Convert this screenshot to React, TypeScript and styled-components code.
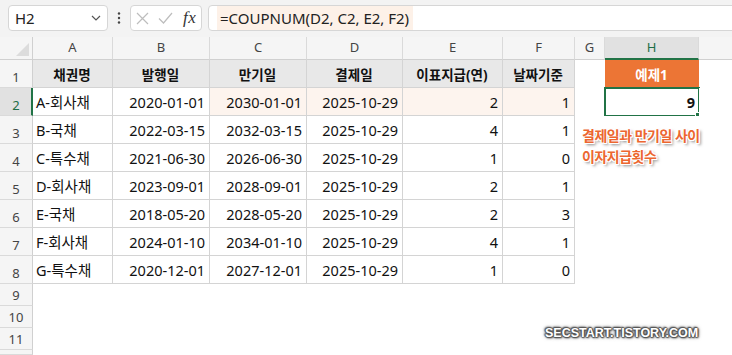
import React from 'react';
import styled, { createGlobalStyle, css } from 'styled-components';

const GlobalStyle = createGlobalStyle`
  html, body { margin: 0; padding: 0; background: #fff; }
  body { font-family: "Noto Sans", "Noto Sans CJK KR", sans-serif; overflow: hidden; }
`;

const Page = styled.div`
  width: 732px;
  height: 355px;
  overflow: hidden;
  background: #fff;
  display: flex;
  flex-direction: column;
`;

const Toolbar = styled.div`
  height: 37px;
  flex: none;
  box-sizing: border-box;
  background: #f3f3f3;
  display: flex;
  align-items: flex-start;
  padding: 5px 0 0 8px;
`;

const NameBox = styled.div`
  width: 100px;
  height: 26px;
  flex: none;
  box-sizing: border-box;
  background: #fff;
  border: 1px solid #d6d6d6;
  border-radius: 4px;
  display: flex;
  align-items: center;
  justify-content: space-between;
  padding: 0 6px 0 6px;
  font-size: 15px;
  color: #222;
`;

const Separator = styled.div`
  width: 22px;
  height: 26px;
  flex: none;
  display: flex;
  align-items: center;
  justify-content: center;
`;

const FxBox = styled.div`
  width: 72px;
  height: 26px;
  flex: none;
  box-sizing: border-box;
  background: #fff;
  border: 1px solid #d6d6d6;
  border-radius: 4px;
  display: flex;
  align-items: center;
  padding: 0 4px 0 5px;
  gap: 9px;
`;

const FxLabel = styled.span`
  font-family: "Liberation Serif", "DejaVu Serif", serif;
  font-style: italic;
  font-size: 17px;
  color: #333;
  margin-left: 1px;
  letter-spacing: 0.5px;
`;

const FormulaBar = styled.div`
  flex: 1;
  margin-left: 6px;
  margin-right: -20px;
  height: 26px;
  box-sizing: border-box;
  background: #fff;
  border: 1px solid #d6d6d6;
  border-radius: 4px;
  display: flex;
  align-items: stretch;
  padding-left: 8px;
`;

const FormulaText = styled.span`
  background: #fdf1e8;
  display: flex;
  align-items: center;
  padding: 0 4px 0 3px;
  font-size: 15px;
  color: #222;
  white-space: nowrap;
`;

const Sheet = styled.div`
  position: relative;
  flex: 1;
  display: grid;
  grid-template-columns: 33px 80px 97px 97px 96px 100px 72px 30px 94px 1fr;
  grid-template-rows: 23px repeat(8, 28px) repeat(3, 22px) 1fr;
`;

const Corner = styled.div`
  position: relative;
  box-sizing: border-box;
  background: #f5f5f5;
  border-right: 1px solid #d0d0d0;
  border-bottom: 1px solid #d0d0d0;
  &::after {
    content: '';
    position: absolute;
    right: 3px;
    bottom: 3px;
    width: 0;
    height: 0;
    border-left: 13px solid transparent;
    border-bottom: 13px solid #dcdcdc;
  }
`;

const ColHeader = styled.div<{ $active?: boolean; $last?: boolean }>`
  box-sizing: border-box;
  background: ${p => (p.$active ? '#e1e1e1' : '#f5f5f5')};
  border-right: ${p => (p.$last ? 'none' : '1px solid #dadada')};
  border-bottom: ${p => (p.$active ? '2px solid #217346' : '1px solid #d0d0d0')};
  display: flex;
  align-items: center;
  justify-content: center;
  font-size: 13px;
  color: ${p => (p.$active ? '#1e6e46' : '#444')};
  padding-bottom: ${p => (p.$active ? '1px' : '2px')};
`;

const RowHeader = styled.div<{ $active?: boolean }>`
  box-sizing: border-box;
  background: ${p => (p.$active ? '#e1e1e1' : '#f5f5f5')};
  border-right: ${p => (p.$active ? '2px solid #217346' : '1px solid #d0d0d0')};
  border-bottom: 1px solid #dadada;
  display: flex;
  align-items: flex-end;
  justify-content: center;
  padding-bottom: 2px;
  padding-left: ${p => (p.$active ? '1px' : '0')};
  font-size: 13px;
  line-height: 16px;
  color: ${p => (p.$active ? '#1e6e46' : '#444')};
`;

type Align = 'left' | 'right' | 'center';

const Cell = styled.div<{ $align?: Align; $bold?: boolean; $bg?: string; $border?: boolean; $head?: boolean }>`
  position: relative;
  box-sizing: border-box;
  display: flex;
  align-items: center;
  justify-content: ${p => (p.$align === 'right' ? 'flex-end' : p.$align === 'center' ? 'center' : 'flex-start')};
  padding: 0 4px 0 3px;
  font-size: ${p => (p.$head ? '13.5px' : '14.5px')};
  font-weight: ${p => (p.$bold ? 700 : 400)};
  color: #111;
  white-space: nowrap;
  background: ${p => p.$bg ?? '#fff'};
  ${p =>
    p.$border &&
    css`
      border-right: 1px solid #d4d4d4;
      border-bottom: 1px solid #d4d4d4;
    `}
`;

const ExampleHead = styled(Cell)`
  background: #ec7535;
  color: #fff;
  font-size: 13.5px;
`;

const Selection = styled.div`
  position: absolute;
  left: -1px;
  top: -1px;
  right: -1px;
  bottom: -1px;
  border: 2px solid #217346;
  pointer-events: none;
  &::after {
    content: '';
    position: absolute;
    right: -4px;
    bottom: -4px;
    width: 5px;
    height: 5px;
    background: #217346;
    border: 1px solid #fff;
  }
`;

const Note = styled.div`
  position: absolute;
  left: 582px;
  top: 88px;
  font-size: 14px;
  font-weight: 700;
  line-height: 21px;
  letter-spacing: -0.5px;
  color: #ec6630;
  white-space: nowrap;
  text-shadow:
    1px 0 0 #fff, -1px 0 0 #fff, 0 1px 0 #fff, 0 -1px 0 #fff,
    1px 1px 0 #fff, -1px -1px 0 #fff, 1px -1px 0 #fff, -1px 1px 0 #fff,
    2px 2px 3px rgba(0, 0, 0, 0.55);
`;

const Watermark = styled.div`
  position: absolute;
  left: 545px;
  top: 289px;
  font-family: "Liberation Sans", Arial, sans-serif;
  font-size: 12.5px;
  font-weight: 700;
  line-height: 14px;
  color: #fff;
  white-space: nowrap;
  text-shadow:
    1px 0 1px #555, -1px 0 1px #555, 0 1px 1px #555, 0 -1px 1px #555,
    1px 1px 2px #444, -1px -1px 2px #444, 0 0 4px rgba(0, 0, 0, 0.6);
`;

const Chevron = () => (
  <svg width="10" height="6" viewBox="0 0 10 6">
    <path d="M1 1l4 4 4-4" fill="none" stroke="#555" strokeWidth="1.2" />
  </svg>
);

const Dots = () => (
  <svg width="4" height="14" viewBox="0 0 4 14">
    <circle cx="2" cy="2.5" r="1.2" fill="#444" />
    <circle cx="2" cy="7" r="1.2" fill="#444" />
    <circle cx="2" cy="11.5" r="1.2" fill="#444" />
  </svg>
);

const CrossIcon = () => (
  <svg width="13" height="13" viewBox="0 0 13 13">
    <path d="M1 1l11 11M12 1L1 12" fill="none" stroke="#bdbdbd" strokeWidth="1.2" />
  </svg>
);

const CheckIcon = () => (
  <svg width="15" height="12" viewBox="0 0 15 12">
    <path d="M1 6.5l4.5 4.5L14 1" fill="none" stroke="#bdbdbd" strokeWidth="1.2" />
  </svg>
);

const columns = ['A', 'B', 'C', 'D', 'E', 'F', 'G', 'H'];
const headers = ['채권명', '발행일', '만기일', '결제일', '이표지급(연)', '날짜기준'];
const rows: [string, string, string, string, number, number][] = [
  ['A-회사채', '2020-01-01', '2030-01-01', '2025-10-29', 2, 1],
  ['B-국채', '2022-03-15', '2032-03-15', '2025-10-29', 4, 1],
  ['C-특수채', '2021-06-30', '2026-06-30', '2025-10-29', 1, 0],
  ['D-회사채', '2023-09-01', '2028-09-01', '2025-10-29', 2, 1],
  ['E-국채', '2018-05-20', '2028-05-20', '2025-10-29', 2, 3],
  ['F-회사채', '2024-01-10', '2034-01-10', '2025-10-29', 4, 1],
  ['G-특수채', '2020-12-01', '2027-12-01', '2025-10-29', 1, 0],
];

const PEACH = '#fdf4ee';

export default function App() {
  return (
    <Page>
      <GlobalStyle />
      <Toolbar>
        <NameBox>
          <span>H2</span>
          <Chevron />
        </NameBox>
        <Separator>
          <Dots />
        </Separator>
        <FxBox>
          <CrossIcon />
          <CheckIcon />
          <FxLabel>fx</FxLabel>
        </FxBox>
        <FormulaBar>
          <FormulaText>=COUPNUM(D2, C2, E2, F2)</FormulaText>
        </FormulaBar>
      </Toolbar>
      <Sheet>
        <Corner />
        {columns.map(c => (
          <ColHeader key={c} $active={c === 'H'}>
            {c}
          </ColHeader>
        ))}
        <ColHeader $last />

        <RowHeader>1</RowHeader>
        {headers.map(h => (
          <Cell key={h} $border $bold $head $align="center" $bg="#e8e8e8">
            {h}
          </Cell>
        ))}
        <Cell />
        <ExampleHead $bold $align="center">예제1</ExampleHead>
        <Cell />

        {rows.map((r, i) => {
          const rowNo = i + 2;
          const hi = rowNo === 2;
          return (
            <React.Fragment key={rowNo}>
              <RowHeader $active={hi}>{rowNo}</RowHeader>
              <Cell $border>{r[0]}</Cell>
              <Cell $border $align="right">{r[1]}</Cell>
              <Cell $border $align="right" $bg={hi ? PEACH : undefined}>{r[2]}</Cell>
              <Cell $border $align="right" $bg={hi ? PEACH : undefined}>{r[3]}</Cell>
              <Cell $border $align="right" $bg={hi ? PEACH : undefined}>{r[4]}</Cell>
              <Cell $border $align="right" $bg={hi ? PEACH : undefined}>{r[5]}</Cell>
              <Cell />
              {hi ? (
                <Cell $align="right" $bold>
                  9
                  <Selection />
                </Cell>
              ) : (
                <Cell />
              )}
              <Cell />
            </React.Fragment>
          );
        })}

        {[9, 10, 11].map(n => (
          <React.Fragment key={n}>
            <RowHeader>{n}</RowHeader>
            {columns.map(c => (
              <Cell key={c} />
            ))}
            <Cell />
          </React.Fragment>
        ))}
        <RowHeader />

        <Note>
          결제일과 만기일 사이
          <br />
          이자지급횟수
        </Note>
        <Watermark>SECSTART.TISTORY.COM</Watermark>
      </Sheet>
    </Page>
  );
}
